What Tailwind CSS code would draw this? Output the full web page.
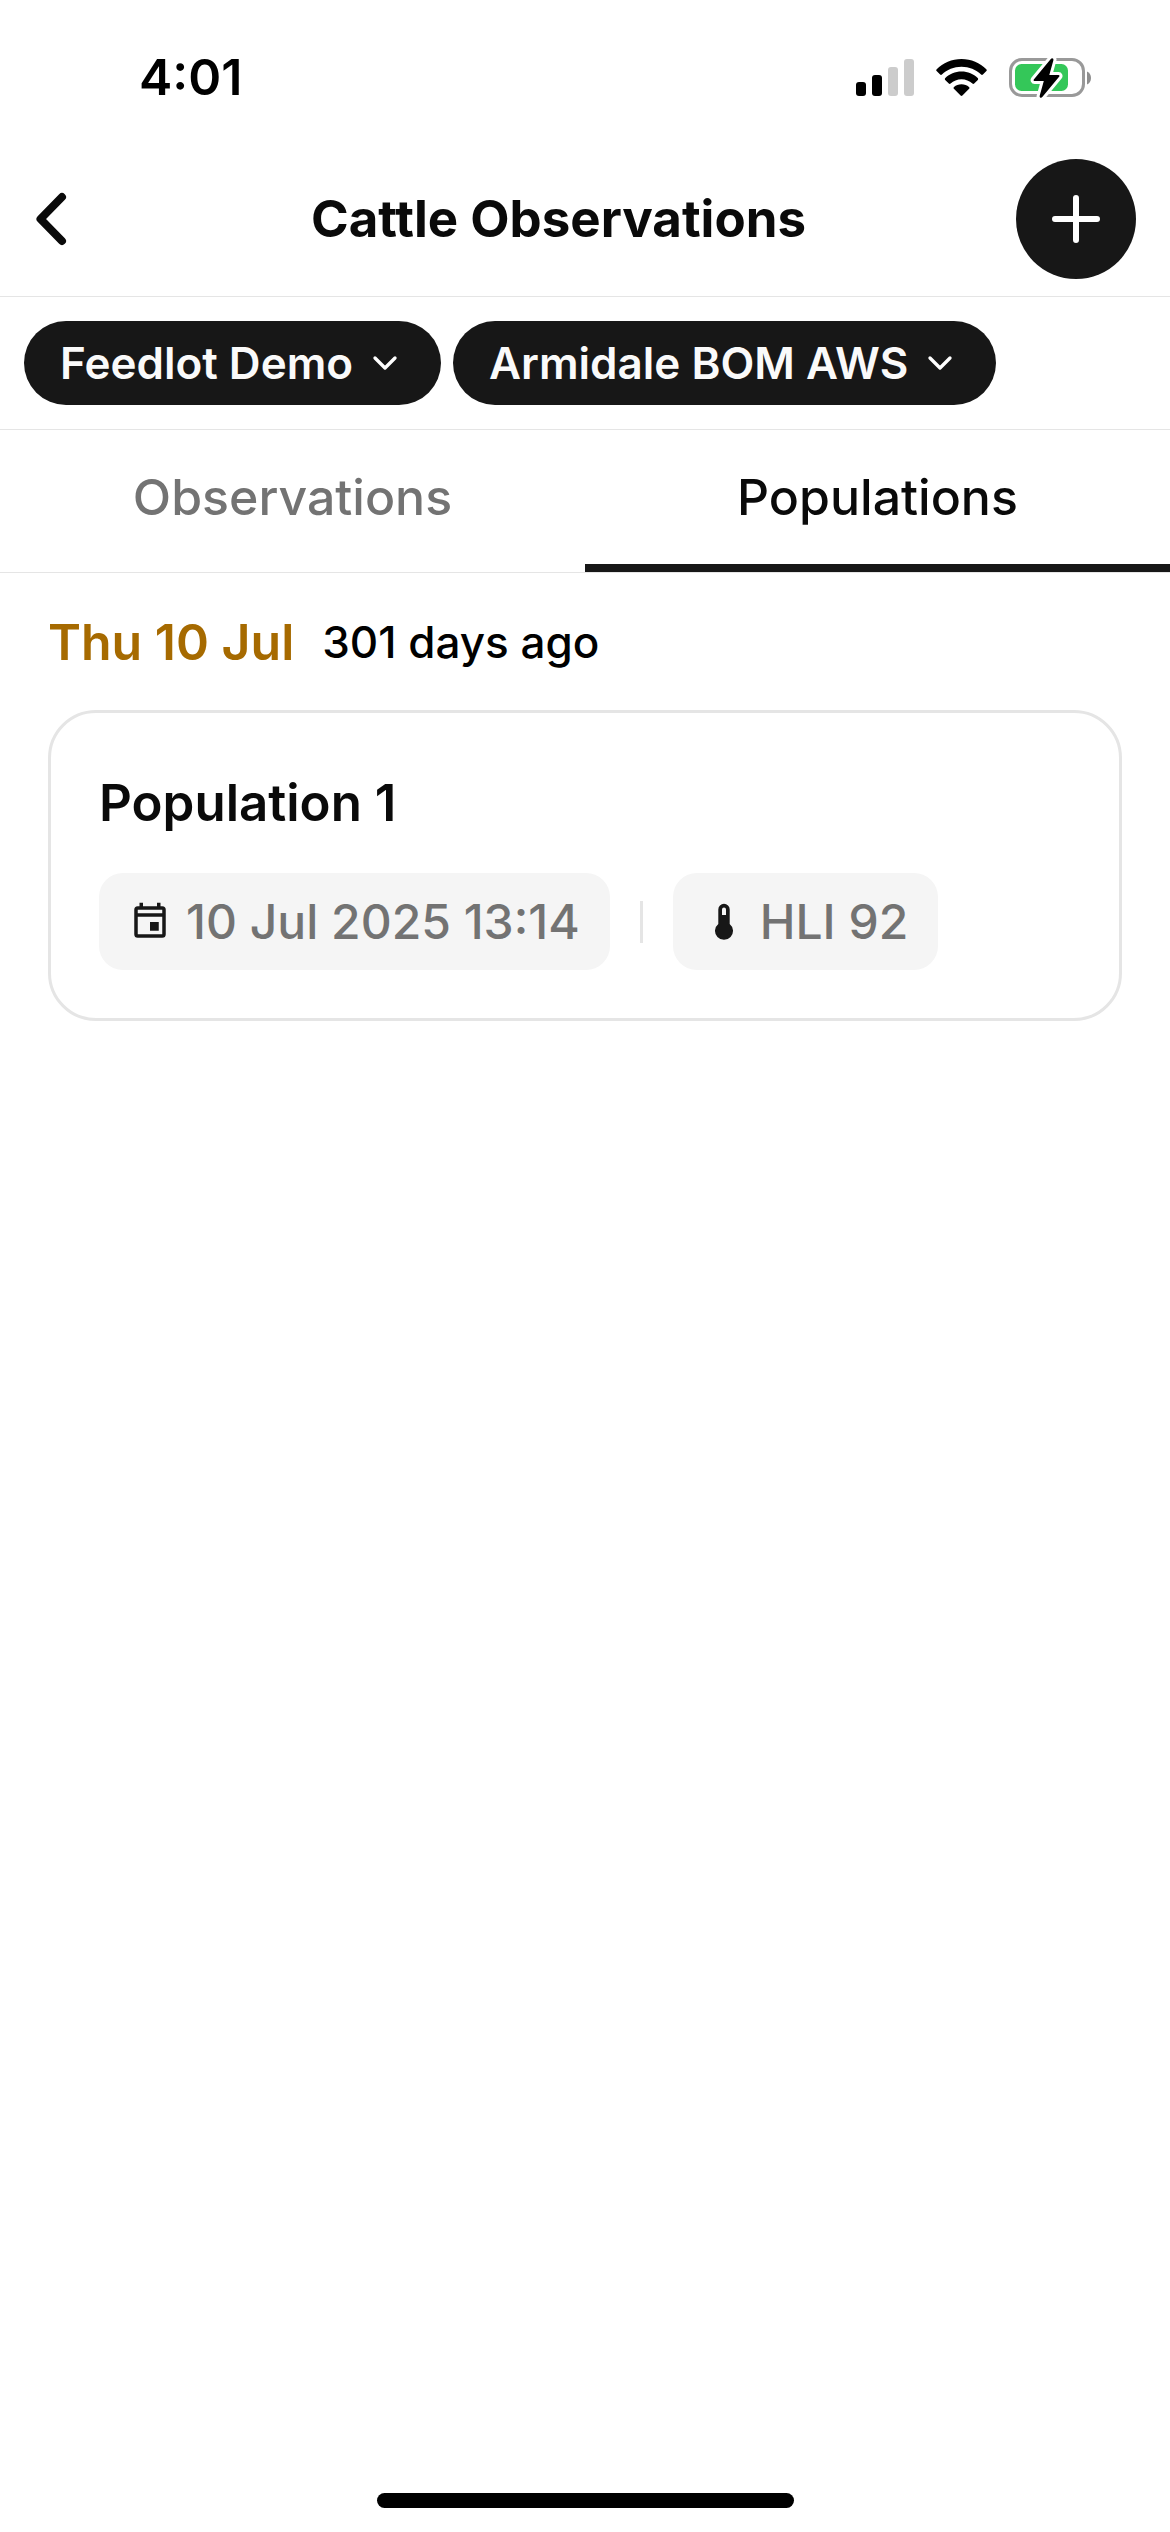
<!DOCTYPE html>
<html lang="en">
<head>
    <meta charset="UTF-8">
    <meta name="viewport" content="width=device-width, initial-scale=1.0">
    <title>Cattle Observations</title>
    <script src="https://cdn.jsdelivr.net/npm/@tailwindcss/browser@4"></script>
</head>
<body class="min-h-screen flex flex-col bg-white text-neutral-950 font-['Inter',sans-serif]">
    <!-- Status bar -->
    <div class="h-[141px] shrink-0 flex items-center justify-between pl-[139px] pr-[79px] pt-[13px] text-black">
        <span class="text-[50px] leading-[60px] font-semibold">4:01</span>
        <div class="flex items-center gap-[22px]">
            <svg class="w-[58px] h-[39px]" viewBox="0 0 58 39" aria-hidden="true">
                <rect x="0" y="24" width="10" height="14" rx="3" />
                <rect x="16" y="17" width="10" height="21" rx="3" />
                <rect x="32" y="9" width="10" height="29" rx="3" fill="#cccccc" />
                <rect x="48" y="1" width="10" height="37" rx="3" fill="#cccccc" />
            </svg>
            <svg class="w-[51px] h-[39px]" viewBox="0 0 51 39" aria-hidden="true">
                <path d="M25.500 1C35.200 1 44 4.800 50.300 11.200C50.900 11.800 50.900 12.600 50.400 13.100L46.900 16.600C46.400 17.100 45.600 17.100 45.100 16.600C40 11.600 33.100 8.700 25.500 8.700C17.900 8.700 11 11.600 5.900 16.600C5.400 17.100 4.600 17.100 4.100 16.600L.6 13.100C.1 12.600 .1 11.800 .7 11.200C7 4.800 15.800 1 25.500 1Z" />
                <path d="M25.500 13.600C31.900 13.600 37.600 16.100 41.700 20.100C42.300 20.700 42.300 21.500 41.800 22L38.200 25.500C37.700 26 37 26 36.400 25.500C33.500 22.900 29.700 21.300 25.500 21.300C21.300 21.300 17.500 22.900 14.600 25.500C14 26 13.300 26 12.800 25.500L9.200 22C8.700 21.500 8.700 20.700 9.300 20.100C13.400 16.100 19.100 13.600 25.500 13.600Z" />
                <path d="M25.500 26.200C28.400 26.200 31 27.200 33 28.900C33.600 29.400 33.600 30.200 33.100 30.700L26.400 37.500C25.900 38 25.100 38 24.600 37.500L17.900 30.700C17.400 30.200 17.400 29.400 18 28.900C20 27.200 22.600 26.200 25.500 26.200Z" />
            </svg>
            <svg class="w-[82px] h-[43px]" viewBox="0 0 82 43" aria-hidden="true">
                <rect x="1.500" y="3.500" width="73" height="36" rx="11.500" fill="none" stroke="#999999" stroke-width="3" />
                <path d="M78 15.500C80.500 16.500 82 19 82 22C82 25 80.500 27.500 78 28.500Z" fill="#8e8e8e" />
                <rect x="6" y="8" width="53" height="27" rx="6.500" fill="#34c759" />
                <path d="M41.800 3L24.800 23.400C24.300 24.100 24.700 25 25.600 25H34.800L30.700 39.800C30.200 41.600 32.200 42.600 33.300 41.100L50.300 20.600C50.800 19.900 50.400 19 49.500 19H40.300L44.400 4.200C44.900 2.400 42.900 1.500 41.800 3Z" fill="#000" stroke="#fff" stroke-width="6" stroke-linejoin="round" paint-order="stroke" />
            </svg>
        </div>
    </div>

    <!-- Header -->
    <header class="flex items-center px-[34px] pt-[18px] pb-[17px] border-b border-neutral-200">
        <button type="button" aria-label="Back" class="w-[67px] h-[120px] flex items-center">
            <svg class="w-[35px] h-[54px]" viewBox="0 0 35 54" fill="none" stroke="currentColor" stroke-width="8" stroke-linecap="round" stroke-linejoin="round" aria-hidden="true">
                <path d="M28 5L6.500 27L28 49" />
            </svg>
        </button>
        <h1 class="flex-1 text-center text-[51px] leading-[60px] font-bold">Cattle Observations</h1>
        <button type="button" aria-label="Add observation" class="size-[120px] rounded-full bg-neutral-900 text-white flex items-center justify-center">
            <svg class="size-[48px]" viewBox="0 0 48 48" stroke="currentColor" stroke-width="6" stroke-linecap="round" aria-hidden="true">
                <path d="M24 3V45M3 24H45" />
            </svg>
        </button>
    </header>

    <!-- Filters -->
    <div class="flex gap-3 p-6 border-b border-neutral-200">
        <div class="relative">
            <select aria-label="Site" class="block h-[84px] appearance-none field-sizing-content rounded-full bg-neutral-900 text-neutral-50 pl-9 pr-[88px] text-[44px] leading-[60px] font-semibold">
                <option>Feedlot Demo</option>
            </select>
            <svg class="absolute right-9 top-[22px] size-10 text-white pointer-events-none" viewBox="0 0 24 24" fill="none" stroke="currentColor" stroke-width="2" stroke-linecap="round" stroke-linejoin="round" aria-hidden="true">
                <path d="M6 9l6 6 6-6" />
            </svg>
        </div>
        <div class="relative">
            <select aria-label="Weather station" class="block h-[84px] appearance-none field-sizing-content rounded-full bg-neutral-900 text-neutral-50 pl-9 pr-[88px] text-[44px] leading-[60px] font-semibold">
                <option>Armidale BOM AWS</option>
            </select>
            <svg class="absolute right-9 top-[22px] size-10 text-white pointer-events-none" viewBox="0 0 24 24" fill="none" stroke="currentColor" stroke-width="2" stroke-linecap="round" stroke-linejoin="round" aria-hidden="true">
                <path d="M6 9l6 6 6-6" />
            </svg>
        </div>
    </div>

    <!-- Tabs -->
    <div role="tablist" class="grid grid-cols-2 border-b border-neutral-200 text-[50px] leading-[60px] font-medium">
        <button type="button" role="tab" aria-selected="false" class="h-[142px] border-b-8 border-transparent text-neutral-500">Observations</button>
        <button type="button" role="tab" aria-selected="true" class="h-[142px] border-b-8 border-neutral-900">Populations</button>
    </div>

    <!-- Population list -->
    <main class="flex-1 px-12 pt-[39px]">
        <div class="flex items-center gap-7">
            <h2 class="text-[50px] leading-[60px] font-semibold text-[#a66a00]">Thu 10 Jul</h2>
            <span class="text-[44px] leading-[60px] font-medium text-black">301 days ago</span>
        </div>
        <article class="mt-[38px] border-3 border-neutral-200 rounded-[48px] p-12">
            <h3 class="mt-3 text-[51px] leading-[60px] font-semibold">Population 1</h3>
            <div class="mt-10 flex items-center gap-[30px] text-[48px] leading-[60px] font-medium text-neutral-500">
                <div class="h-[97px] flex items-center gap-[15px] rounded-3xl bg-neutral-100 px-[30px]">
                    <svg class="size-[42px] text-neutral-900" viewBox="0 0 24 24" fill="currentColor" aria-hidden="true">
                        <path fill-rule="evenodd" d="M19 3h-1V1h-2v2H8V1H6v2H5a2 2 0 0 0-2 2v14a2 2 0 0 0 2 2h14a2 2 0 0 0 2-2V5a2 2 0 0 0-2-2zm0 16H5V9h14zM5 7V5h14v2zM12 12h5v5h-5z" />
                    </svg>
                    <span>10 Jul 2025 13:14</span>
                </div>
                <div class="w-[3px] h-[42px] bg-neutral-200"></div>
                <div class="h-[97px] flex items-center gap-[15px] rounded-3xl bg-neutral-100 px-[30px]">
                    <svg class="size-[42px] text-neutral-900" viewBox="0 0 42 42" fill="currentColor" aria-hidden="true">
                        <path fill-rule="evenodd" d="M15.300 8.500a5.700 5.700 0 0 1 11.400 0V22.900a9 9 0 1 1-11.400 0zM19 8.500V14h4V8.500a2 2 0 0 0-4 0z" />
                    </svg>
                    <span>HLI 92</span>
                </div>
            </div>
        </article>
    </main>

    <!-- Home indicator -->
    <div class="mx-auto mb-6 w-[417px] h-[15px] rounded-full bg-black"></div>
</body>
</html>
